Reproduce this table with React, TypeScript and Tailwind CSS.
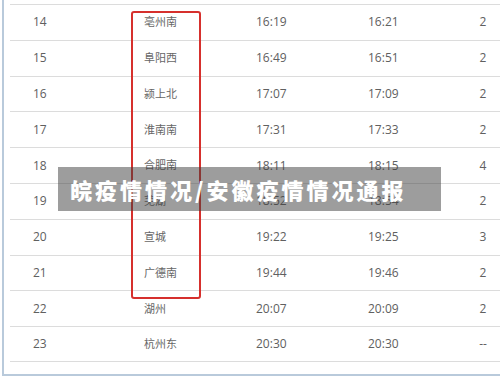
import React from "react";

const rows = [
  ["14", "亳州南", "16:19", "16:21", "2"],
  ["15", "阜阳西", "16:49", "16:51", "2"],
  ["16", "颍上北", "17:07", "17:09", "2"],
  ["17", "淮南南", "17:31", "17:33", "2"],
  ["18", "合肥南", "18:11", "18:15", "4"],
  ["19", "芜湖", "18:52", "18:54", "2"],
  ["20", "宣城", "19:22", "19:25", "3"],
  ["21", "广德南", "19:44", "19:46", "2"],
  ["22", "湖州", "20:07", "20:09", "2"],
  ["23", "杭州东", "20:30", "20:30", "--"],
];

export default function App() {
  return (
    <div className="relative w-[500px] h-[379px] bg-white overflow-hidden">
      <div
        className="ml-[2px] h-[376px] border-l-2 border-b-2 border-[#b9cadb] text-[#606060] text-[12px]"
        style={{ fontFamily: '"Open Sans", "Noto Sans CJK SC", sans-serif' }}
      >
        <div className="ml-[6px] pt-[4px]">
          {rows.map((r, i) => (
            <div
              key={i}
              className={`grid grid-cols-[111px_112px_112px_110px_1fr] items-center h-[35.8px] pl-[23px] border-t border-[#dcdcdc] ${i === rows.length - 1 ? "border-b" : ""}`}
            >
              <span>{r[0]}</span>
              <span className="text-[11px] text-[#666]">{r[1]}</span>
              <span>{r[2]}</span>
              <span>{r[3]}</span>
              <span className="text-center w-[10px]">{r[4]}</span>
            </div>
          ))}
        </div>
      </div>
      <div className="absolute left-[131px] top-[11px] w-[70px] h-[288px] border-2 border-[#d6302d] rounded-[3px]" />
      <div className="absolute left-[58px] top-[167px] w-[383px] h-[44px] bg-[rgba(60,60,60,0.5)] flex items-center pl-[12px]">
        <span
          className="text-white font-black text-[22px] tracking-[3px] leading-none"
          style={{ fontFamily: '"Noto Sans CJK SC", sans-serif' }}
        >
          皖疫情情况/安徽疫情情况通报
        </span>
      </div>
    </div>
  );
}
